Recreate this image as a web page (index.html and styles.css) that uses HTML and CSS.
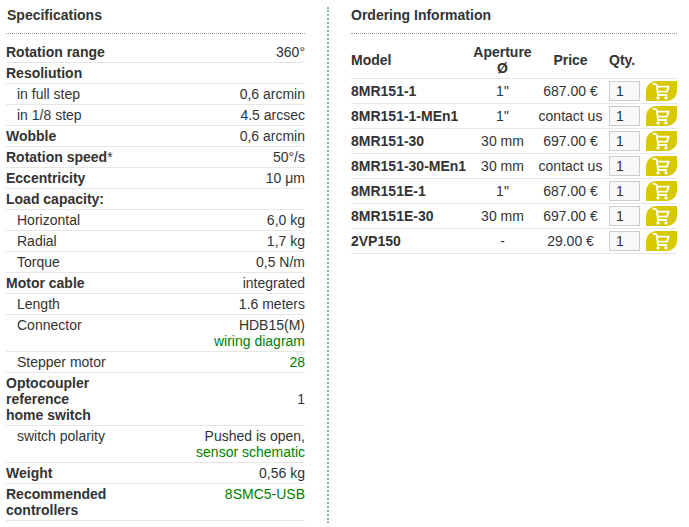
FILE: index.html
```html
<!DOCTYPE html>
<html lang="en">
<head>
<meta charset="utf-8">
<title>Specifications</title>
<link rel="stylesheet" href="styles.css">
</head>
<body>
<svg class="defs" width="0" height="0" aria-hidden="true"><symbol id="cart" viewBox="0 0 31 20"><path d="M6.5 2.6 9.6 3.2C10.4 3.4 10.7 3.9 10.8 4.6L12 14H21M10.6 5.6H22.6L21 10.6H11.4" fill="none" stroke="#fff" stroke-width="1.8"/><circle cx="12" cy="16.9" r="1.7" fill="#fff"/><circle cx="20" cy="16.9" r="1.7" fill="#fff"/></symbol></svg>
<main class="page">
<section class="specs">
<h2>Specifications</h2>
<table class="spec-table">
<tr><th>Rotation range</th><td>360°</td></tr>
<tr><th>Resoliution</th><td></td></tr>
<tr class="sub"><th>in full step</th><td>0,6 arcmin</td></tr>
<tr class="sub"><th>in 1/8 step</th><td>4.5 arcsec</td></tr>
<tr><th>Wobble</th><td>0,6 arcmin</td></tr>
<tr><th>Rotation speed<span class="star">*</span></th><td>50°/s</td></tr>
<tr><th>Eccentricity</th><td>10 μm</td></tr>
<tr><th>Load capacity:</th><td></td></tr>
<tr class="sub"><th>Horizontal</th><td>6,0 kg</td></tr>
<tr class="sub"><th>Radial</th><td>1,7 kg</td></tr>
<tr class="sub"><th>Torque</th><td>0,5 N/m</td></tr>
<tr><th>Motor cable</th><td>integrated</td></tr>
<tr class="sub"><th>Length</th><td>1.6 meters</td></tr>
<tr class="sub"><th>Connector</th><td>HDB15(M)<br><a href="#">wiring diagram</a></td></tr>
<tr class="sub"><th>Stepper motor</th><td><a href="#">28</a></td></tr>
<tr class="mid"><th>Optocoupler<br>reference<br>home switch</th><td>1</td></tr>
<tr class="sub"><th>switch polarity</th><td>Pushed is open,<br><a href="#">sensor schematic</a></td></tr>
<tr><th>Weight</th><td>0,56 kg</td></tr>
<tr><th>Recommended<br>controllers</th><td><a href="#">8SMC5-USB</a></td></tr>
</table>
</section>
<section class="order">
<h2>Ordering Information</h2>
<table class="order-table">
<thead><tr><th class="model">Model</th><th class="ap">Aperture<br>Ø</th><th class="price">Price</th><th class="qty-h">Qty.</th><th class="buy"></th></tr></thead>
<tbody>
<tr><th class="model">8MR151-1</th><td class="ap">1"</td><td class="price">687.00 €</td><td class="qty"><input value="1" aria-label="Quantity"></td><td class="buy"><button aria-label="Add to cart"><svg width="31" height="20"><use href="#cart"/></svg></button></td></tr>
<tr><th class="model">8MR151-1-MEn1</th><td class="ap">1"</td><td class="price">contact us</td><td class="qty"><input value="1" aria-label="Quantity"></td><td class="buy"><button aria-label="Add to cart"><svg width="31" height="20"><use href="#cart"/></svg></button></td></tr>
<tr><th class="model">8MR151-30</th><td class="ap">30 mm</td><td class="price">697.00 €</td><td class="qty"><input value="1" aria-label="Quantity"></td><td class="buy"><button aria-label="Add to cart"><svg width="31" height="20"><use href="#cart"/></svg></button></td></tr>
<tr><th class="model">8MR151-30-MEn1</th><td class="ap">30 mm</td><td class="price">contact us</td><td class="qty"><input value="1" aria-label="Quantity"></td><td class="buy"><button aria-label="Add to cart"><svg width="31" height="20"><use href="#cart"/></svg></button></td></tr>
<tr><th class="model">8MR151E-1</th><td class="ap">1"</td><td class="price">687.00 €</td><td class="qty"><input value="1" aria-label="Quantity"></td><td class="buy"><button aria-label="Add to cart"><svg width="31" height="20"><use href="#cart"/></svg></button></td></tr>
<tr><th class="model">8MR151E-30</th><td class="ap">30 mm</td><td class="price">697.00 €</td><td class="qty"><input value="1" aria-label="Quantity"></td><td class="buy"><button aria-label="Add to cart"><svg width="31" height="20"><use href="#cart"/></svg></button></td></tr>
<tr><th class="model">2VP150</th><td class="ap">-</td><td class="price">29.00 €</td><td class="qty"><input value="1" aria-label="Quantity"></td><td class="buy"><button aria-label="Add to cart"><svg width="31" height="20"><use href="#cart"/></svg></button></td></tr>
</tbody>
</table>
</section>
</main>
</body>
</html>
```
FILE: styles.css
```css
html, body { margin: 0; padding: 0; background: #fff; }
body { font: 14px/16px "Liberation Sans", Arial, sans-serif; color: #333; overflow: hidden; }
.defs { position: absolute; }
.page { display: flex; align-items: flex-start; padding: 7px 0 0 6px; }
.specs { width: 299px; padding-right: 22px; border-right: 2px dotted #7fbf9f; height: 516px; }
.order { width: 326px; margin-left: 22px; }
h2 { margin: 0; height: 26px; padding-left: 1px; line-height: 16px; font-size: 14px; font-weight: bold; border-bottom: 1px dotted #999; }
.order h2 { padding-left: 0; }
table { border-collapse: collapse; width: 100%; }
.spec-table { margin-top: 8px; }
.spec-table th, .spec-table td { padding: 2px 0; border-bottom: 1px solid #e6e6e6; vertical-align: top; }
.spec-table th { text-align: left; font-weight: bold; }
.spec-table td { text-align: right; }
.spec-table .sub th { padding-left: 11px; font-weight: normal; }
.spec-table .mid td { vertical-align: middle; }
.star { font-weight: normal; }
a { color: #008000; text-decoration: none; }
.order-table { margin-top: 10px; table-layout: fixed; }
.order-table th, .order-table td { padding: 0; border-bottom: 1px solid #e6e6e6; height: 25px; text-align: center; vertical-align: middle; white-space: nowrap; box-sizing: border-box; }
.order-table thead th { height: 34px; padding-bottom: 1px; }
.order-table .model { width: 117px; text-align: left; }
.order-table .ap { width: 69px; }
.order-table .price { width: 67px; }
.order-table .qty-h, .order-table .qty { width: 42px; padding-left: 5px; text-align: left; }
.order-table .buy { width: 31px; }
input { box-sizing: border-box; display: block; width: 31px; height: 20px; padding: 0 0 0 6px; border: 1px solid #ccc; background: #f8f8f8; color: #333; font: 14px "Liberation Sans", Arial, sans-serif; }
button { display: block; width: 31px; height: 20px; padding: 0; border: 0; background: #d8c800; border-radius: 10px 0 10px 0; }
button svg { display: block; }
```
